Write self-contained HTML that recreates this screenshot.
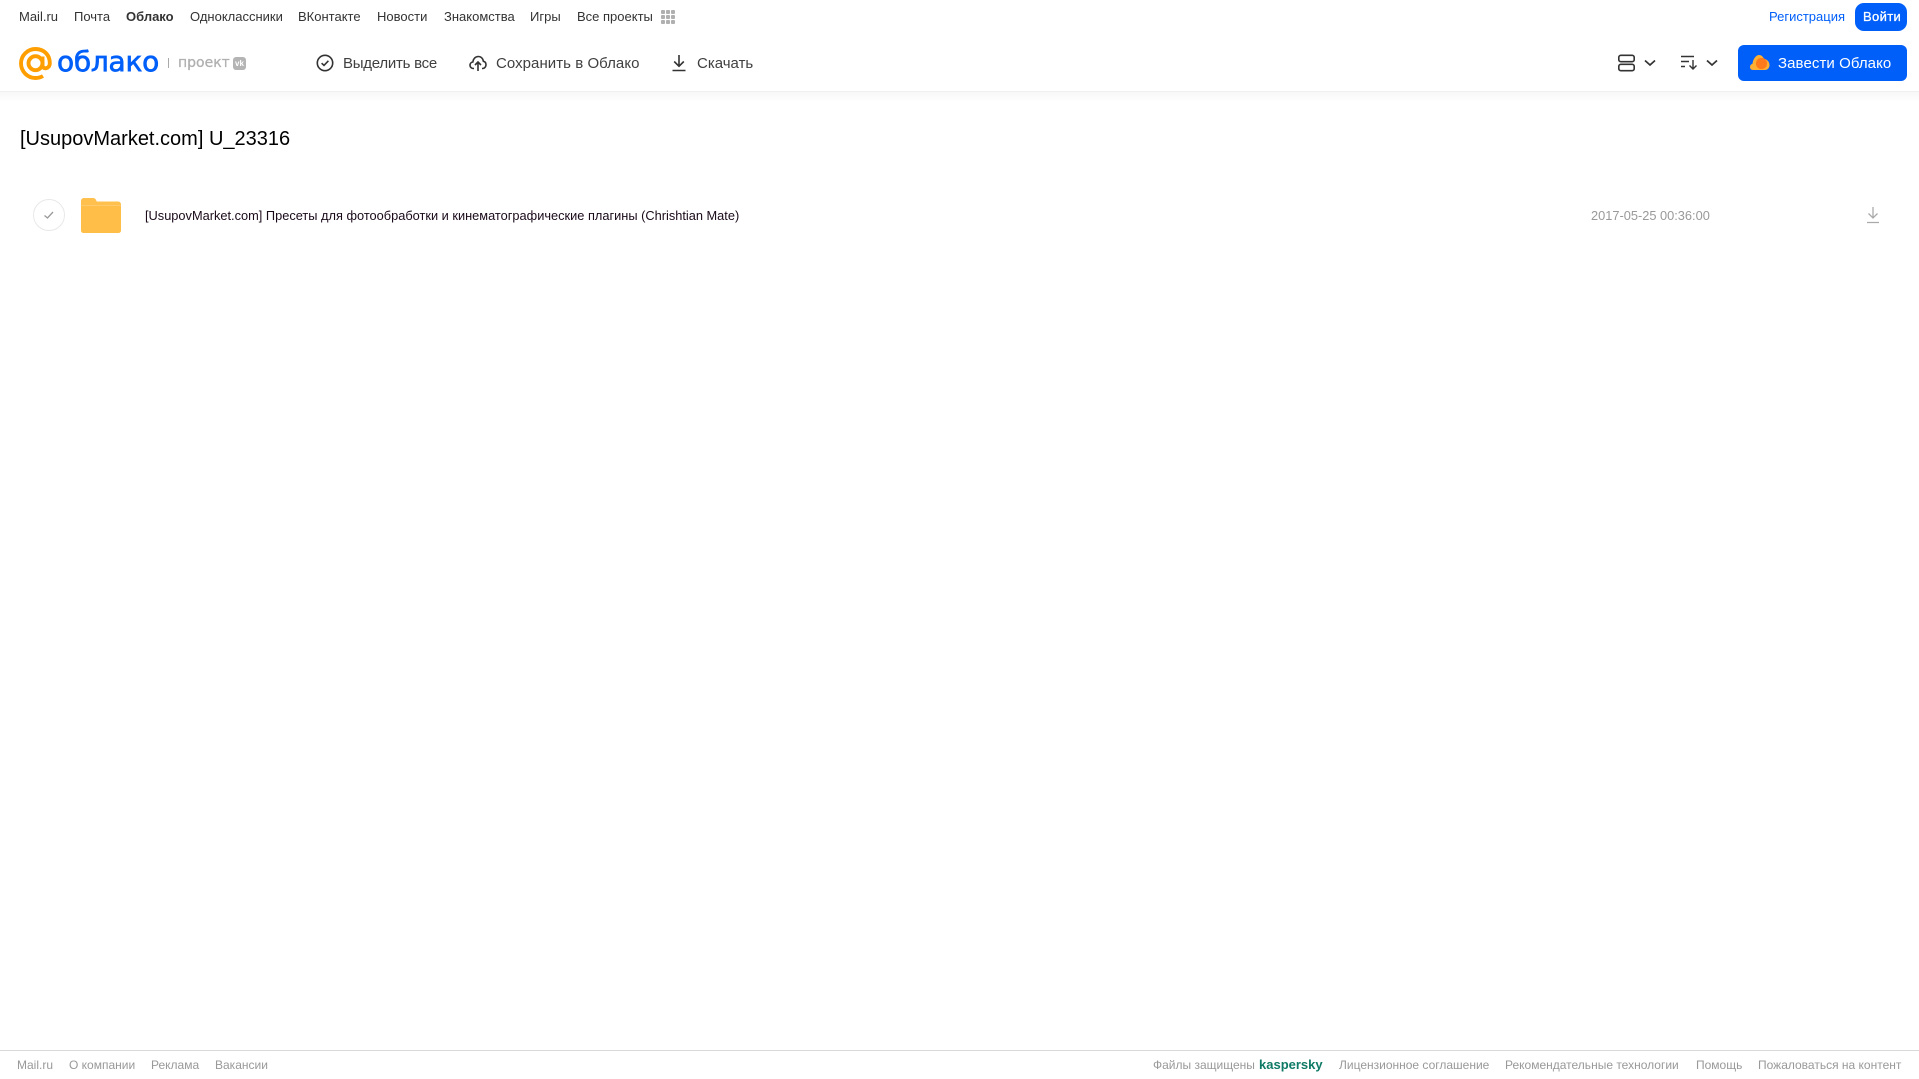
<!DOCTYPE html>
<html lang="ru"><head><meta charset="utf-8"><title>Облако</title>
<style>
html,body{margin:0;padding:0;background:#fff;}
body{position:relative;width:1919px;height:1079px;overflow:hidden;font-family:"Liberation Sans",sans-serif;}
.t{position:absolute;white-space:nowrap;line-height:20px;}
.n{top:7px;font-size:13px;color:#333;}
.b{top:53.5px;font-size:15px;color:#404040;}
.f{top:1055px;font-size:12px;color:#999;}
svg{position:absolute;overflow:visible;}
</style></head><body>
<div style="position:absolute;left:0;top:0;width:1919px;height:91px;background:#fff;border-bottom:1px solid #f0f0f0;"></div>
<div style="position:absolute;left:0;top:92px;width:1919px;height:10px;background:linear-gradient(#f7f7f7,#fff);"></div>

<span class="t n" style="left:19px">Mail.ru</span>
<span class="t n" style="left:74px">Почта</span>
<span class="t n" style="left:126px;font-weight:bold">Облако</span>
<span class="t n" style="left:190px">Одноклассники</span>
<span class="t n" style="left:298px">ВКонтакте</span>
<span class="t n" style="left:377px">Новости</span>
<span class="t n" style="left:444px">Знакомства</span>
<span class="t n" style="left:530px">Игры</span>
<span class="t n" style="left:577px">Все проекты</span>
<svg style="left:661px;top:10px" width="15" height="15" fill="#b0b0b0"><rect x="0" y="0" width="4" height="4" rx="1"/><rect x="5" y="0" width="4" height="4" rx="1"/><rect x="10" y="0" width="4" height="4" rx="1"/><rect x="0" y="5" width="4" height="4" rx="1"/><rect x="5" y="5" width="4" height="4" rx="1"/><rect x="10" y="5" width="4" height="4" rx="1"/><rect x="0" y="10" width="4" height="4" rx="1"/><rect x="5" y="10" width="4" height="4" rx="1"/><rect x="10" y="10" width="4" height="4" rx="1"/></svg>

<span class="t n" style="left:1769px;color:#005ff9">Регистрация</span>
<div style="position:absolute;left:1855px;top:3px;width:52px;height:28px;background:#005ff9;border-radius:9px;"></div>
<span class="t n" style="left:1863px;color:#fff;-webkit-text-stroke:.3px #fff;letter-spacing:.35px">Войти</span>

<!-- logo -->
<svg style="left:19px;top:47px" width="33" height="33" viewBox="0 0 33 33" fill="none" stroke="#ff9e00" stroke-width="3.9"><circle cx="16.5" cy="16.2" r="7"/><path d="M23.5 9.5V18.5C23.5 22.5 30.8 22.5 30.8 16C30.8 7.5 24.5 2 16.5 2C8.5 2 2 8.5 2 16.3C2 24.5 8.5 31 16.5 31C19.5 31 21.8 30.3 24 29"/></svg>
<span class="t" style="left:57px;top:46px;font-family:'DejaVu Sans',sans-serif;font-size:28px;line-height:32px;color:#005ff9;-webkit-text-stroke:.7px #005ff9;letter-spacing:-.25px">облако</span>
<div style="position:absolute;left:168px;top:58px;width:1px;height:10px;background:#aaa;"></div>
<span class="t" style="left:178px;top:53px;font-family:'DejaVu Sans',sans-serif;font-size:14px;color:#b0b0b0;-webkit-text-stroke:.3px #b0b0b0;">проект</span>
<div style="position:absolute;left:233px;top:57px;width:13px;height:13px;background:#b4b4b4;border-radius:3px;color:#fff;font-size:8px;font-weight:bold;line-height:13px;text-align:center;">vk</div>

<!-- toolbar -->
<svg style="left:316px;top:54px" width="18" height="18" viewBox="0 0 18 18" fill="none" stroke="#333" stroke-width="1.6"><circle cx="9" cy="9" r="7.7"/><path d="M5.6 9.2L8 11.4L12.4 6.8"/></svg>
<span class="t b" style="left:343px;letter-spacing:-.25px">Выделить все</span>
<svg style="left:469px;top:54px" width="18" height="18" viewBox="0 0 18 18" fill="none" stroke="#333" stroke-width="1.6"><path d="M5 14.5H4.5C2.5 14.5 1 13 1 11.2C1 9.4 2.3 8.2 3.8 8C4.2 4.8 6.4 2.5 9.3 2.5C12 2.5 14 4.5 14.4 7.3C16 7.6 17 9 17 10.8C17 12.9 15.4 14.5 13.5 14.5H13"/><path d="M9 17V8.5M6 11L9 8L12 11"/></svg>
<span class="t b" style="left:496px;letter-spacing:.05px">Сохранить в Облако</span>
<svg style="left:671px;top:54px" width="16" height="18" viewBox="0 0 16 18" fill="none" stroke="#333" stroke-width="1.6"><path d="M8 1V12M3.2 7.5L8 12.3L12.8 7.5M1.5 16.5H14.5"/></svg>
<span class="t b" style="left:697px">Скачать</span>

<svg style="left:1618px;top:54px" width="17" height="18" viewBox="0 0 17 18" fill="none" stroke="#333" stroke-width="1.6"><rect x=".8" y="1.3" width="15.4" height="6.4" rx="2"/><rect x=".8" y="10.3" width="15.4" height="6.4" rx="2"/></svg>
<svg style="left:1644px;top:59px" width="12" height="8" viewBox="0 0 12 8" fill="none" stroke="#333" stroke-width="1.7"><path d="M1 1.5L6 6L11 1.5"/></svg>
<svg style="left:1681px;top:55px" width="17" height="15" viewBox="0 0 17 15" fill="none" stroke="#333" stroke-width="1.4"><path d="M0 1.5H13M0 6.5H8M0 11.5H4M12 5V14M8.5 10.5L12 14L15.5 10.5"/></svg>
<svg style="left:1706px;top:59px" width="12" height="8" viewBox="0 0 12 8" fill="none" stroke="#333" stroke-width="1.7"><path d="M1 1.5L6 6L11 1.5"/></svg>

<div style="position:absolute;left:1738px;top:45px;width:169px;height:36px;background:#005ff9;border-radius:6px;"></div>
<svg style="left:1750px;top:54px" width="20" height="17" viewBox="0 0 20 17"><path d="M3 16C1 16 0 14.5 0 13C0 11 1.5 10 2.5 9.7C3 5 6 1 9 1C12 1 13.5 3.5 14 5C17 5 19.5 8 19.5 11C19.5 14 17.5 16 15 16Z" fill="#ffb033"/><circle cx="11.5" cy="9.5" r="5.6" fill="#ff7a1a"/></svg>
<span class="t b" style="left:1778px;color:#fff;letter-spacing:.08px">Завести Облако</span>

<!-- title -->
<span class="t" style="left:20px;top:126px;font-size:20px;line-height:26px;color:#000;">[UsupovMarket.com] U_23316</span>

<!-- row -->
<svg style="left:33px;top:199px" width="32" height="32" viewBox="0 0 32 32" fill="none"><circle cx="16" cy="16" r="15.5" stroke="#e8e8e8"/><path d="M11.5 16.5L14.5 19L20 13" stroke="#999" stroke-width="1.3"/></svg>
<svg style="left:81px;top:198px" width="40" height="35" viewBox="0 0 40 35"><path d="M0 3C0 1.3 1.3 0 3 0H12C13.5 0 14.5 .8 15 2L15.8 3.5H37C38.7 3.5 40 4.8 40 6.5V32C40 33.7 38.7 35 37 35H3C1.3 35 0 33.7 0 32Z" fill="#ffc04d"/><rect x="0" y="7.5" width="40" height="27.5" rx="2.5" fill="#ffbe47"/><rect x="0" y="7" width="40" height="1" fill="#ffca6b"/></svg>
<span class="t" style="left:145px;top:205.5px;font-size:12.8px;color:#1a0a1a">[UsupovMarket.com] Пресеты для фотообработки и кинематографические плагины (Chrishtian Mate)</span>
<span class="t" style="left:1591px;top:205.5px;font-size:12.8px;color:#999">2017-05-25 00:36:00</span>
<svg style="left:1866px;top:206px" width="14" height="18" viewBox="0 0 14 18" fill="none" stroke="#aaa" stroke-width="1.3"><path d="M7 1V12M2.5 7.5L7 12L11.5 7.5M1 16.5H13"/></svg>

<!-- footer -->
<div style="position:absolute;left:0;top:1050px;width:1919px;height:1px;background:#d9d9d9;"></div>
<span class="t f" style="left:17px">Mail.ru</span>
<span class="t f" style="left:69px">О компании</span>
<span class="t f" style="left:151px">Реклама</span>
<span class="t f" style="left:215px">Вакансии</span>
<span class="t f" style="left:1153px">Файлы защищены</span>
<span class="t f" style="left:1259px;color:#0f7a66;font-weight:bold;font-size:13px;">kaspersky</span>
<span class="t f" style="left:1339px">Лицензионное соглашение</span>
<span class="t f" style="left:1505px">Рекомендательные технологии</span>
<span class="t f" style="left:1696px">Помощь</span>
<span class="t f" style="left:1758px">Пожаловаться на контент</span>
</body></html>
